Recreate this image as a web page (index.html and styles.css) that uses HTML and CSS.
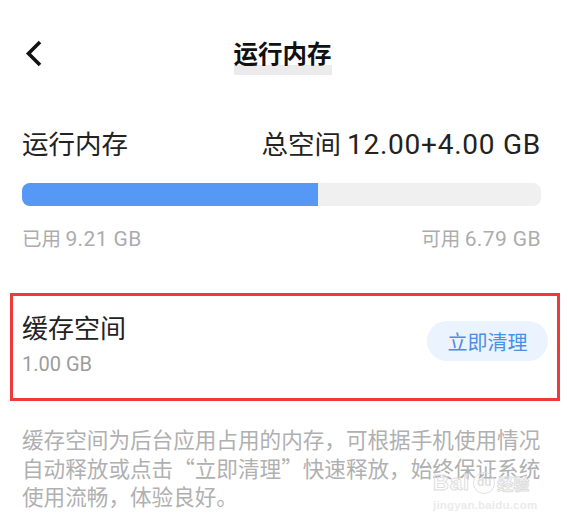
FILE: index.html
```html
<!DOCTYPE html>
<html lang="zh-CN">
<head>
<meta charset="utf-8">
<title>运行内存</title>
<link rel="stylesheet" href="styles.css">
</head>
<body>
<div class="page">
  <header class="topbar">
    <svg class="back" width="20" height="30" viewBox="0 0 20 30" aria-hidden="true">
      <polyline points="16,3 4.5,14.5 16,26" fill="none" stroke="#111" stroke-width="3.6" stroke-linejoin="miter"/>
    </svg>
    <h1 class="title"><span>运行内存</span></h1>
    <div class="spacer"></div>
  </header>

  <section class="mem">
    <div class="row head">
      <span>运行内存</span>
      <span>总空间 <span class="num">12.00+4.00 GB</span></span>
    </div>
    <div class="bar"><div class="fill" style="width:57.1%"></div></div>
    <div class="row sub">
      <span>已用 <span class="num">9.21 GB</span></span>
      <span>可用 <span class="num">6.79 GB</span></span>
    </div>
  </section>

  <section class="cache">
    <div class="cache-info">
      <div class="cache-title">缓存空间</div>
      <div class="cache-size"><span class="num">1.00 GB</span></div>
    </div>
    <button class="clean">立即清理</button>
  </section>

  <p class="desc">缓存空间为后台应用占用的内存，可根据手机使用情况自动释放或点击“立即清理”快速释放，始终保证系统使用流畅，体验良好。</p>

  <div class="watermark">
    <div class="wm-top"><span class="wm-bai">Bai</span><span class="wm-du">du</span><span class="wm-jy">经验</span></div>
    <div class="wm-url">jingyan.baidu.com</div>
  </div>
</div>
</body>
</html>
```

FILE: styles.css
```css
* { box-sizing: border-box; }
html, body { margin: 0; padding: 0; background: #fff; }
body {
  font-family: "Noto Sans CJK SC", "Noto Sans", sans-serif;
  color: #222;
}
.page {
  position: relative;
  width: 568px;
  height: 523px;
  overflow: hidden;
  padding: 0 27px 0 22px;
}
.num {
  font-family: Roboto, "Noto Sans", sans-serif;
  line-height: 1;
}

/* top bar */
.topbar {
  display: grid;
  grid-template-columns: 1fr auto 1fr;
  align-items: start;
  padding-top: 39px;
  margin-left: 2px;
}
.back { display: block; }
.title {
  margin: 2px 0 0;
  font-size: 24.5px;
  font-weight: 700;
  line-height: 24px;
  color: #111;
}
.title span {
  display: inline-block;
  padding-bottom: 10px;
  background: linear-gradient(to bottom, transparent 24px, #ebebeb 24px);
}

/* memory section */
.mem { margin-top: 52px; }
.row {
  display: flex;
  justify-content: space-between;
  align-items: baseline;
}
.head {
  height: 31px;
  font-size: 26.5px;
  line-height: 31px;
  color: #222;
}
.head .num { font-size: 28px; letter-spacing: 0.75px; }
.bar {
  margin-top: 25px;
  height: 23px;
  border-radius: 8px;
  background: #f0f0f0;
  overflow: hidden;
}
.fill {
  height: 100%;
  background: #5598f6;
}
.sub {
  height: 24px;
  margin-top: 20px;
  font-size: 19.5px;
  line-height: 24px;
  color: #acacac;
}
.sub .num { font-size: 21px; letter-spacing: 0.4px; }

/* cache card */
.cache {
  margin: 43px -19px 0 -12px;
  border: 3px solid #f03a3a;
  display: flex;
  align-items: center;
  justify-content: space-between;
  padding: 15px 9px 23px 9px;
}
.cache-title {
  font-size: 26px;
  line-height: 31px;
  color: #222;
}
.cache-size {
  height: 24px;
  margin-top: 9px;
  font-size: 20px;
  line-height: 24px;
  color: #9c9c9c;
}
.clean {
  width: 121px;
  height: 40px;
  border: none;
  border-radius: 20px;
  background: #eaf3fe;
  color: #4a8fe6;
  font-family: "Noto Sans CJK SC", sans-serif;
  font-size: 20px;
  padding: 0;
  margin-bottom: 4px;
}

/* description */
.desc {
  margin: 24px 0 0;
  font-size: 21.6px;
  line-height: 28.5px;
  color: #b0b0b0;
}

/* watermark */
.watermark {
  position: absolute;
  left: 433px;
  top: 468px;
  color: #e4e4e4;
  pointer-events: none;
}
.wm-top {
  display: flex;
  align-items: center;
  height: 30px;
}
.wm-bai {
  font-family: "Liberation Sans", sans-serif;
  font-size: 22px;
  font-weight: 700;
  color: transparent;
  -webkit-text-stroke: 1px #dedede;
  letter-spacing: 1px;
}
.wm-du {
  display: inline-block;
  margin-left: 3px;
  width: 22px;
  height: 22px;
  border-radius: 50%;
  border: 1.5px solid #e0e0e0;
  font-family: "Liberation Sans", sans-serif;
  font-size: 12px;
  font-weight: 700;
  line-height: 19px;
  text-align: center;
  color: #e0e0e0;
}
.wm-jy {
  margin-left: 2px;
  font-size: 16px;
  font-weight: 700;
  color: transparent;
  -webkit-text-stroke: 1px #dedede;
}
.wm-url {
  margin-top: 1px;
  font-family: "Liberation Sans", sans-serif;
  font-size: 11.5px;
  font-weight: 700;
  color: #ebebeb;
  letter-spacing: 0.2px;
}
```
